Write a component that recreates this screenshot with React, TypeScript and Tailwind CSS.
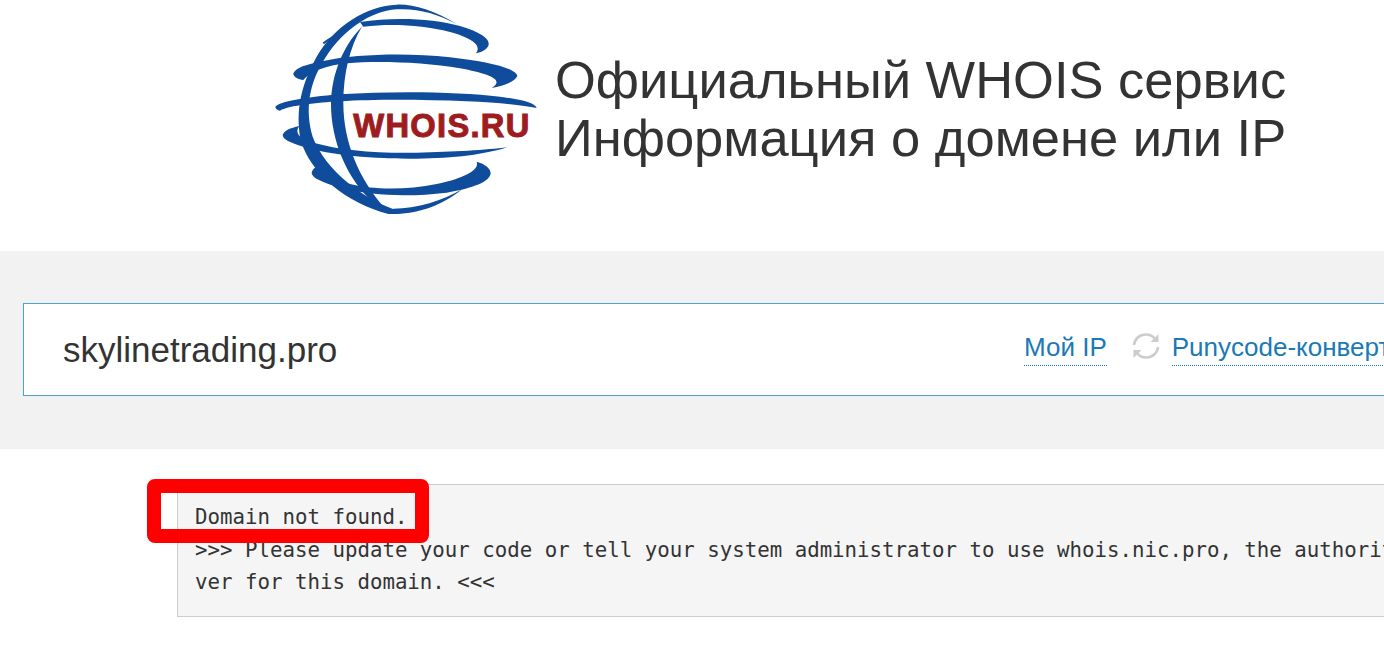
function Logo() {
  return (
    <svg viewBox="0 0 870 675" className="w-[290px] h-[225px] shrink-0" fill="#0f4c9c">
      {/* outer sphere */}
      <path d="M590 72 C520 30 460 12 410 14 C320 18 225 75 170 170 C125 250 105 330 122 420 C150 520 260 610 385 642 L420 634 C310 600 195 510 158 410 C135 330 145 250 198 170 C250 90 330 34 410 28 C470 24 530 40 590 72 Z" />
      <path d="M385 642 C470 646 550 615 606 568 C550 602 470 626 400 626 Z" />
      <path d="M190 130 C230 100 270 90 310 50" fill="none" stroke="#0f4c9c" strokeWidth="6" />
      <path d="M190 490 C220 520 260 560 300 590" fill="none" stroke="#0f4c9c" strokeWidth="6" />
      {/* main meridian */}
      <path d="M318 68 C250 130 215 220 213 310 C212 420 260 540 345 612 L372 622 C300 540 250 430 250 310 C250 220 270 140 305 82 Z" />
      {/* latitudes */}
      <path d="M300 66 C400 50 520 55 600 78 C660 96 690 115 686 135 C680 150 665 156 648 160 C668 135 630 112 570 96 C490 76 400 70 310 80 Z" />
      <path d="M100 222 C105 205 130 195 190 183 C290 162 440 158 570 172 C680 184 770 205 772 228 C765 245 730 258 695 264 C735 240 690 222 600 205 C490 186 350 182 260 190 C200 196 150 215 130 240 C115 238 102 232 100 222 Z" />
      <path d="M46 320 C60 305 130 292 240 283 C400 272 600 275 720 290 C780 298 825 308 830 324 C790 316 720 308 620 304 C480 298 340 298 240 304 C170 308 90 316 60 332 C52 330 46 326 46 320 Z" />
      <path d="M68 405 C72 392 90 384 118 378 C105 395 112 415 160 428 C240 450 340 460 470 458 C580 456 680 450 742 442 C680 462 580 476 470 476 C340 476 210 466 130 440 C90 428 68 418 68 405 Z" />
      <path d="M155 518 C158 505 170 498 190 495 C180 510 200 530 270 552 C340 570 440 570 530 552 C610 535 660 510 650 485 C675 492 692 505 692 520 C690 545 640 565 560 578 C460 590 340 590 250 565 C195 550 155 535 155 518 Z" />
      <text x="280" y="412" fontFamily="'Liberation Sans', Arial, sans-serif" fontWeight="700" fontSize="98" fill="#9e1c20" stroke="#9e1c20" strokeWidth="3" textLength="528" lengthAdjust="spacing">WHOIS.RU</text>
    </svg>
  );
}

function SyncIcon() {
  return (
    <svg viewBox="0 0 28 28" className="ml-[25px] w-[28px] h-[28px] shrink-0 mb-[2px]" fill="none" stroke="#cccccc" strokeWidth="2.6">
      <path d="M2 13 C2.5 7 7.5 2.5 14 2.5 C18 2.5 21 4.2 23 7" />
      <path d="M26 15 C25.5 21 20.5 25.5 14 25.5 C10 25.5 7 23.8 5 21" />
      <path d="M26.5 2 V10 H18.5 Z" fill="#cccccc" stroke="none" />
      <path d="M1.5 26 V18 H9.5 Z" fill="#cccccc" stroke="none" />
    </svg>
  );
}

export default function App() {
  return (
    <div className="w-[1384px] h-[671px] overflow-hidden bg-white font-['Liberation_Sans',Arial,sans-serif] relative">
      {/* header */}
      <div className="h-[251px] pl-[260px] flex items-start">
        <Logo />
        <h1 className="ml-[5px] mt-[51px] text-[52.5px] leading-[58px] font-normal text-[#333] whitespace-nowrap">
          Официальный WHOIS сервис
          <br />
          Информация о домене или IP
        </h1>
      </div>

      {/* search band */}
      <div className="h-[198px] bg-[#f2f2f2] pt-[52px] pl-[23px]">
        <div className="w-[1400px] h-[93px] bg-white border border-[#5a9fc4] shadow-[0_0_0_1px_#e4f1f7] flex items-center pl-[39px]">
          <span className="text-[35px] text-[#333] w-[961px] shrink-0 mt-[2px]">skylinetrading.pro</span>
          <div className="flex items-center mb-[5px]">
            <a className="text-[26px] leading-[36px] text-[#1a7ab5] border-b border-dotted border-[#1a7ab5] whitespace-nowrap">Мой IP</a>
            <SyncIcon />
            <a className="ml-[12px] text-[26px] leading-[36px] text-[#1a7ab5] border-b border-dotted border-[#1a7ab5] whitespace-nowrap">Punycode-конвертер</a>
          </div>
        </div>
      </div>

      {/* whois output */}
      <div className="pt-[35px] pl-[177px]">
        <pre className="w-[1400px] h-[133px] bg-[#f5f5f5] border border-[#cccccc] pl-[17px] pt-[16px] font-['DejaVu_Sans_Mono',monospace] text-[20.75px] leading-[32.5px] text-[#333]">
          {"Domain not found.\n>>> Please update your code or tell your system administrator to use whois.nic.pro, the authoritative whois ser\nver for this domain. <<<"}
        </pre>
      </div>

      {/* annotation */}
      <div className="absolute left-[147px] top-[479px] w-[282px] h-[64px] border-[14px] border-[#ff0000] rounded-[8px]" />
    </div>
  );
}
